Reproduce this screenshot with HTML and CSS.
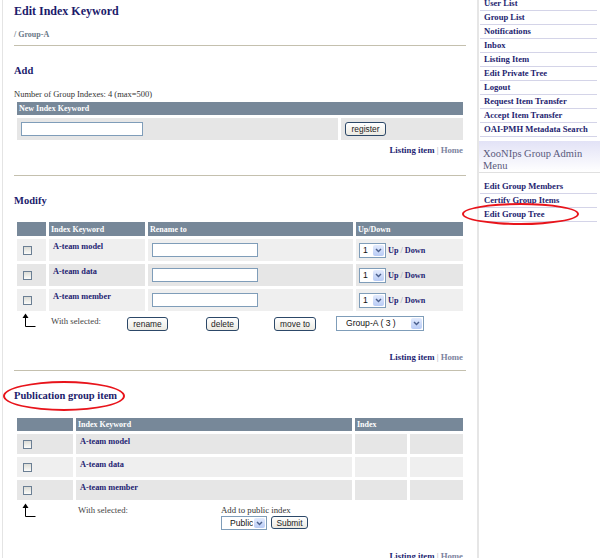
FILE: index.html
```html
<!DOCTYPE html>
<html>
<head>
<meta charset="utf-8">
<title>Edit Index Keyword</title>
<link rel="stylesheet" href="styles.css">
</head>
<body>
<div class="page">
  <div class="main">
    <h1 class="title">Edit Index Keyword</h1>
    <div class="crumb">/ Group-A</div>
    <div class="rule rule-1"></div>

    <h2 class="sec sec-add">Add</h2>
    <div class="count">Number of Group Indexes: 4 (max=500)</div>
    <table class="grid grid-add">
      <colgroup><col class="c-add1"><col class="c-add2"></colgroup>
      <tr class="hd h13"><th colspan="2">New Index Keyword</th></tr>
      <tr class="r22 dark">
        <td class="mid pl4"><input class="txt txt-new" type="text"></td>
        <td class="mid pl4"><button class="btn w41">register</button></td>
      </tr>
    </table>
    <div class="links links-add"><a href="#">Listing item</a><span class="sep"> | </span><a href="#" class="home">Home</a></div>
    <div class="rule rule-2"></div>

    <h2 class="sec sec-mod">Modify</h2>
    <table class="grid grid-mod">
      <colgroup><col class="c-m1"><col class="c-m2"><col class="c-m3"><col class="c-m4"></colgroup>
      <tr class="hd h14"><th></th><th>Index Keyword</th><th>Rename to</th><th>Up/Down</th></tr>
      <tr class="r22 light">
        <td class="mid"><span class="cb"></span></td>
        <td class="kw"><a href="#">A-team model</a></td>
        <td class="mid pl4"><input class="txt txt-ren" type="text"></td>
        <td class="mid"><div class="ud"><span class="sel sel-n"><span class="sel-val">1</span><span class="sel-btn"><svg width="7" height="5" viewBox="0 0 7 5"><path d="M1 1 L3.5 3.6 L6 1" fill="none" stroke="#4a5f8c" stroke-width="1.4"/></svg></span></span><span class="updown"><a href="#">Up</a><span class="sl"> / </span><a href="#">Down</a></span></div></td>
      </tr>
      <tr class="r22 dark">
        <td class="mid"><span class="cb"></span></td>
        <td class="kw"><a href="#">A-team data</a></td>
        <td class="mid pl4"><input class="txt txt-ren" type="text"></td>
        <td class="mid"><div class="ud"><span class="sel sel-n"><span class="sel-val">1</span><span class="sel-btn"><svg width="7" height="5" viewBox="0 0 7 5"><path d="M1 1 L3.5 3.6 L6 1" fill="none" stroke="#4a5f8c" stroke-width="1.4"/></svg></span></span><span class="updown"><a href="#">Up</a><span class="sl"> / </span><a href="#">Down</a></span></div></td>
      </tr>
      <tr class="r22 light">
        <td class="mid"><span class="cb"></span></td>
        <td class="kw"><a href="#">A-team member</a></td>
        <td class="mid pl4"><input class="txt txt-ren" type="text"></td>
        <td class="mid"><div class="ud"><span class="sel sel-n"><span class="sel-val">1</span><span class="sel-btn"><svg width="7" height="5" viewBox="0 0 7 5"><path d="M1 1 L3.5 3.6 L6 1" fill="none" stroke="#4a5f8c" stroke-width="1.4"/></svg></span></span><span class="updown"><a href="#">Up</a><span class="sl"> / </span><a href="#">Down</a></span></div></td>
      </tr>
    </table>
    <div class="wsel wsel-mod">
      <svg class="arrow" width="16" height="15" viewBox="0 0 16 15"><path d="M2.5 5 L5.5 0.5 L8.5 5 Z" fill="#000"/><path d="M5.5 3 V13.5 H15.5" fill="none" stroke="#000" stroke-width="1"/></svg>
      <span class="ws-text ws-mod">With selected:</span>
      <button class="btn w41 mt3">rename</button>
      <button class="btn w33 mt3 ml38">delete</button>
      <button class="btn w42 mt3 ml35">move to</button>
      <span class="sel sel-grp mt2"><span class="sel-val">Group-A ( 3 )</span><span class="sel-btn"><svg width="7" height="5" viewBox="0 0 7 5"><path d="M1 1 L3.5 3.6 L6 1" fill="none" stroke="#4a5f8c" stroke-width="1.4"/></svg></span></span>
    </div>
    <div class="links links-mod"><a href="#">Listing item</a><span class="sep"> | </span><a href="#" class="home">Home</a></div>
    <div class="rule rule-3"></div>

    <h2 class="sec sec-pub">Publication group item</h2>
    <table class="grid grid-pub">
      <colgroup><col class="c-p1"><col class="c-p2"><col class="c-p3"><col class="c-p4"></colgroup>
      <tr class="hd h13"><th></th><th>Index Keyword</th><th colspan="2">Index</th></tr>
      <tr class="r20 dark">
        <td class="mid"><span class="cb"></span></td>
        <td class="kw"><a href="#">A-team model</a></td>
        <td></td><td></td>
      </tr>
      <tr class="r20 light">
        <td class="mid"><span class="cb"></span></td>
        <td class="kw"><a href="#">A-team data</a></td>
        <td></td><td></td>
      </tr>
      <tr class="r20 dark">
        <td class="mid"><span class="cb"></span></td>
        <td class="kw"><a href="#">A-team member</a></td>
        <td></td><td></td>
      </tr>
    </table>
    <div class="wsel wsel-pub">
      <svg class="arrow" width="16" height="15" viewBox="0 0 16 15"><path d="M2.5 5 L5.5 0.5 L8.5 5 Z" fill="#000"/><path d="M5.5 3 V13.5 H15.5" fill="none" stroke="#000" stroke-width="1"/></svg>
      <span class="ws-text ws-pub">With selected:</span>
      <div class="pubcol">
        <div class="pubtxt">Add to public index</div>
        <div class="pubctl">
          <span class="sel sel-pubi"><span class="sel-val">Public</span><span class="sel-btn"><svg width="7" height="5" viewBox="0 0 7 5"><path d="M1 1 L3.5 3.6 L6 1" fill="none" stroke="#4a5f8c" stroke-width="1.4"/></svg></span></span>
          <button class="btn w37 h13 ml4">Submit</button>
        </div>
      </div>
    </div>
    <div class="links links-pub"><a href="#">Listing item</a><span class="sep"> | </span><a href="#" class="home">Home</a></div>
  </div>

  <div class="sidebar">
    <nav class="menu menu-1">
      <a href="#">User List</a>
      <a href="#">Group List</a>
      <a href="#">Notifications</a>
      <a href="#">Inbox</a>
      <a href="#">Listing Item</a>
      <a href="#">Edit Private Tree</a>
      <a href="#">Logout</a>
      <a href="#">Request Item Transfer</a>
      <a href="#">Accept Item Transfer</a>
      <a href="#">OAI-PMH Metadata Search</a>
    </nav>
    <div class="blocktitle">XooNIps Group Admin<br>Menu</div>
    <nav class="menu menu-2">
      <a href="#">Edit Group Members</a>
      <a href="#">Certify Group Items</a>
      <a href="#">Edit Group Tree</a>
    </nav>
  </div>
</div>
<div class="mark mark-pub"></div>
<div class="mark mark-tree"></div>
</body>
</html>
```

FILE: styles.css
```css
html { overflow: hidden; }
body {
  margin: 0;
  font-family: "Liberation Serif", "Times New Roman", serif;
  color: #333;
  background: #fff;
}
a { text-decoration: none; color: #1e1e72; }

.page {
  display: flex;
  height: 558px;
}

.main {
  width: 475px;
  margin-left: 2px;
  border-left: 1px solid #e4e4e4;
  padding: 0 11px;
  box-sizing: border-box;
}

.title {
  margin: 0;
  padding-top: 4px;
  font-size: 12px;
  line-height: 14px;
  font-weight: bold;
  color: #1b1b6b;
}

.crumb {
  margin-top: 12px;
  font-size: 8px;
  line-height: 10px;
  font-weight: bold;
  color: #6a7888;
}

.rule { height: 1px; background: #c4c0ae; }
.rule-1 { margin-top: 5px; }
.rule-2 { margin-top: 20px; }
.rule-3 { margin-top: 8px; }

.sec {
  margin: 18.5px 0 0;
  font-size: 10.5px;
  line-height: 12px;
  font-weight: bold;
  color: #1b1b6b;
}

.count {
  margin-top: 13.5px;
  font-size: 8.5px;
  line-height: 9px;
  color: #333;
}

.grid {
  border-collapse: separate;
  border-spacing: 3px;
  table-layout: fixed;
  width: 452px;
}
.grid th, .grid td { padding: 0; }
.grid th {
  background: #778899;
  color: #fff;
  font-size: 8px;
  line-height: 13px;
  font-weight: bold;
  text-align: left;
  padding-left: 2px;
  white-space: nowrap;
}
.h13 { height: 13px; }
.h14 { height: 14px; }
.r22 { height: 22px; }
.r20 { height: 20px; }
.dark td { background: #e6e6e6; }
.light td { background: #efefef; }
.mid { vertical-align: middle; }
.pl4 { padding-left: 4px !important; }

.grid-mod { margin-top: 12.5px; }
.grid-pub { margin-top: 13.5px; }

.c-add1 { width: 321px; }
.c-add2 { width: 122px; }
.c-m1 { width: 29px; }
.c-m2 { width: 96px; }
.c-m3 { width: 205px; }
.c-m4 { width: 107px; }
.c-p1 { width: 56px; }
.c-p2 { width: 276px; }
.c-p3 { width: 52px; }
.c-p4 { width: 53px; }

.cb {
  display: block;
  width: 9px;
  height: 9px;
  margin-left: 6px;
  box-sizing: border-box;
  border: 1px solid #6b7f94;
  background: linear-gradient(#dcdcd6, #fbfbf9);
}

.kw {
  vertical-align: top;
  padding: 3px 0 0 4px !important;
}
.kw a {
  display: block;
  font-size: 8.3px;
  line-height: 10px;
  font-weight: bold;
  white-space: nowrap;
}

.txt {
  display: block;
  box-sizing: border-box;
  height: 14px;
  margin: 0;
  padding: 0 2px;
  border: 1px solid #7f9db9;
  background: #fff;
}
.txt-new { width: 122px; }
.txt-ren { width: 106px; }

.btn {
  display: block;
  box-sizing: border-box;
  height: 14px;
  margin: 0;
  padding: 0;
  border: 1px solid #2c4868;
  border-radius: 3px;
  background: linear-gradient(#ffffff, #eceae2);
  font-family: "Liberation Sans", Arial, sans-serif;
  font-size: 8.4px;
  line-height: 12px;
  color: #222;
  text-align: center;
}
.w41 { width: 41px; }
.w33 { width: 33px; }
.w42 { width: 42px; }
.w37 { width: 37px; }
.h13 .btn, .btn.h13 { height: 13px; }
.mt3 { margin-top: 3px; }
.mt2 { margin-top: 2px; }
.ml38 { margin-left: 38px; }
.ml35 { margin-left: 35px; }
.ml4 { margin-left: 4px; }

.sel {
  display: flex;
  box-sizing: border-box;
  height: 15px;
  border: 1px solid #7f9db9;
  background: #fff;
  font-family: "Liberation Sans", Arial, sans-serif;
  font-size: 8.6px;
  line-height: 13px;
  color: #111;
}
.sel-val { flex: 1; white-space: nowrap; overflow: hidden; }
.sel-btn {
  width: 11px;
  margin: 1px;
  border-radius: 2px;
  background: linear-gradient(#e3ebfd, #b8cbf5);
  display: flex;
  align-items: center;
  justify-content: center;
}
.sel-n { width: 27px; }
.sel-n .sel-val { padding-left: 3px; }
.sel-grp { width: 88px; margin-left: 20px; }
.sel-grp .sel-val { padding-left: 9px; }
.sel-pubi { width: 46px; height: 14px; line-height: 12px; }
.sel-pubi .sel-val { padding-left: 8px; }

.ud {
  display: flex;
  align-items: center;
  padding-left: 3px;
}
.updown {
  margin-left: 2px;
  font-size: 8.2px;
  line-height: 10px;
  font-weight: bold;
  white-space: nowrap;
  padding-top: 2px;
}
.updown .sl { color: #8a8fa6; font-weight: normal; }

.wsel {
  display: flex;
  align-items: flex-start;
}
.wsel-mod { height: 20px; }
.wsel-pub { height: 30px; }
.arrow { display: block; margin-left: 6px; flex: none; }
.wsel-mod .arrow { margin-top: -1px; }
.ws-text {
  margin-top: 2px;
  font-size: 8.75px;
  line-height: 10px;
  color: #444;
  white-space: nowrap;
  flex: none;
}
.ws-mod { margin-left: 15px; width: 76px; }
.ws-pub { margin-left: 42px; width: 143px; margin-top: 2.4px; }

.pubcol { display: flex; flex-direction: column; }
.pubtxt {
  margin-top: 2.4px;
  font-size: 8.75px;
  line-height: 10px;
  color: #333;
  white-space: nowrap;
}
.pubctl { display: flex; align-items: flex-start; margin-top: 1px; }

.links {
  text-align: right;
  padding-right: 3px;
  font-size: 8.75px;
  line-height: 10px;
  font-weight: bold;
}
.links .sep { color: #a0a4b4; font-weight: normal; }
.links .home { color: #7c84a0; }
.links-add { margin-top: 2px; }
.links-mod { margin-top: 18px; }
.links-pub { margin-top: 18px; }

.sidebar {
  width: 123px;
  box-sizing: border-box;
  border-left: 2px solid #e6e6e6;
}
.menu { display: block; margin: 0 3px 0 1px; }
.menu-1 { margin-top: -3px; }
.menu-2 { margin-top: 7px; }
.menu a {
  display: block;
  height: 13px;
  border-bottom: 1px solid #d4d4e8;
  padding-left: 4px;
  font-size: 8.6px;
  line-height: 13px;
  font-weight: bold;
  color: #1e1e70;
  white-space: nowrap;
}

.blocktitle {
  margin-top: 4px;
  padding: 7px 0 0 4px;
  font-size: 10.5px;
  line-height: 12px;
  color: #5a5a7c;
  background: linear-gradient(#e2e2f6, #ffffff);
  border-bottom: 1px solid #e0e0e0;
}

.mark {
  position: absolute;
  box-sizing: border-box;
  border: 2px solid #e8141b;
  border-radius: 50%;
}
.mark-pub { left: 3px; top: 381px; width: 122px; height: 30px; }
.mark-tree { left: 462px; top: 203px; width: 117px; height: 22px; }
```
